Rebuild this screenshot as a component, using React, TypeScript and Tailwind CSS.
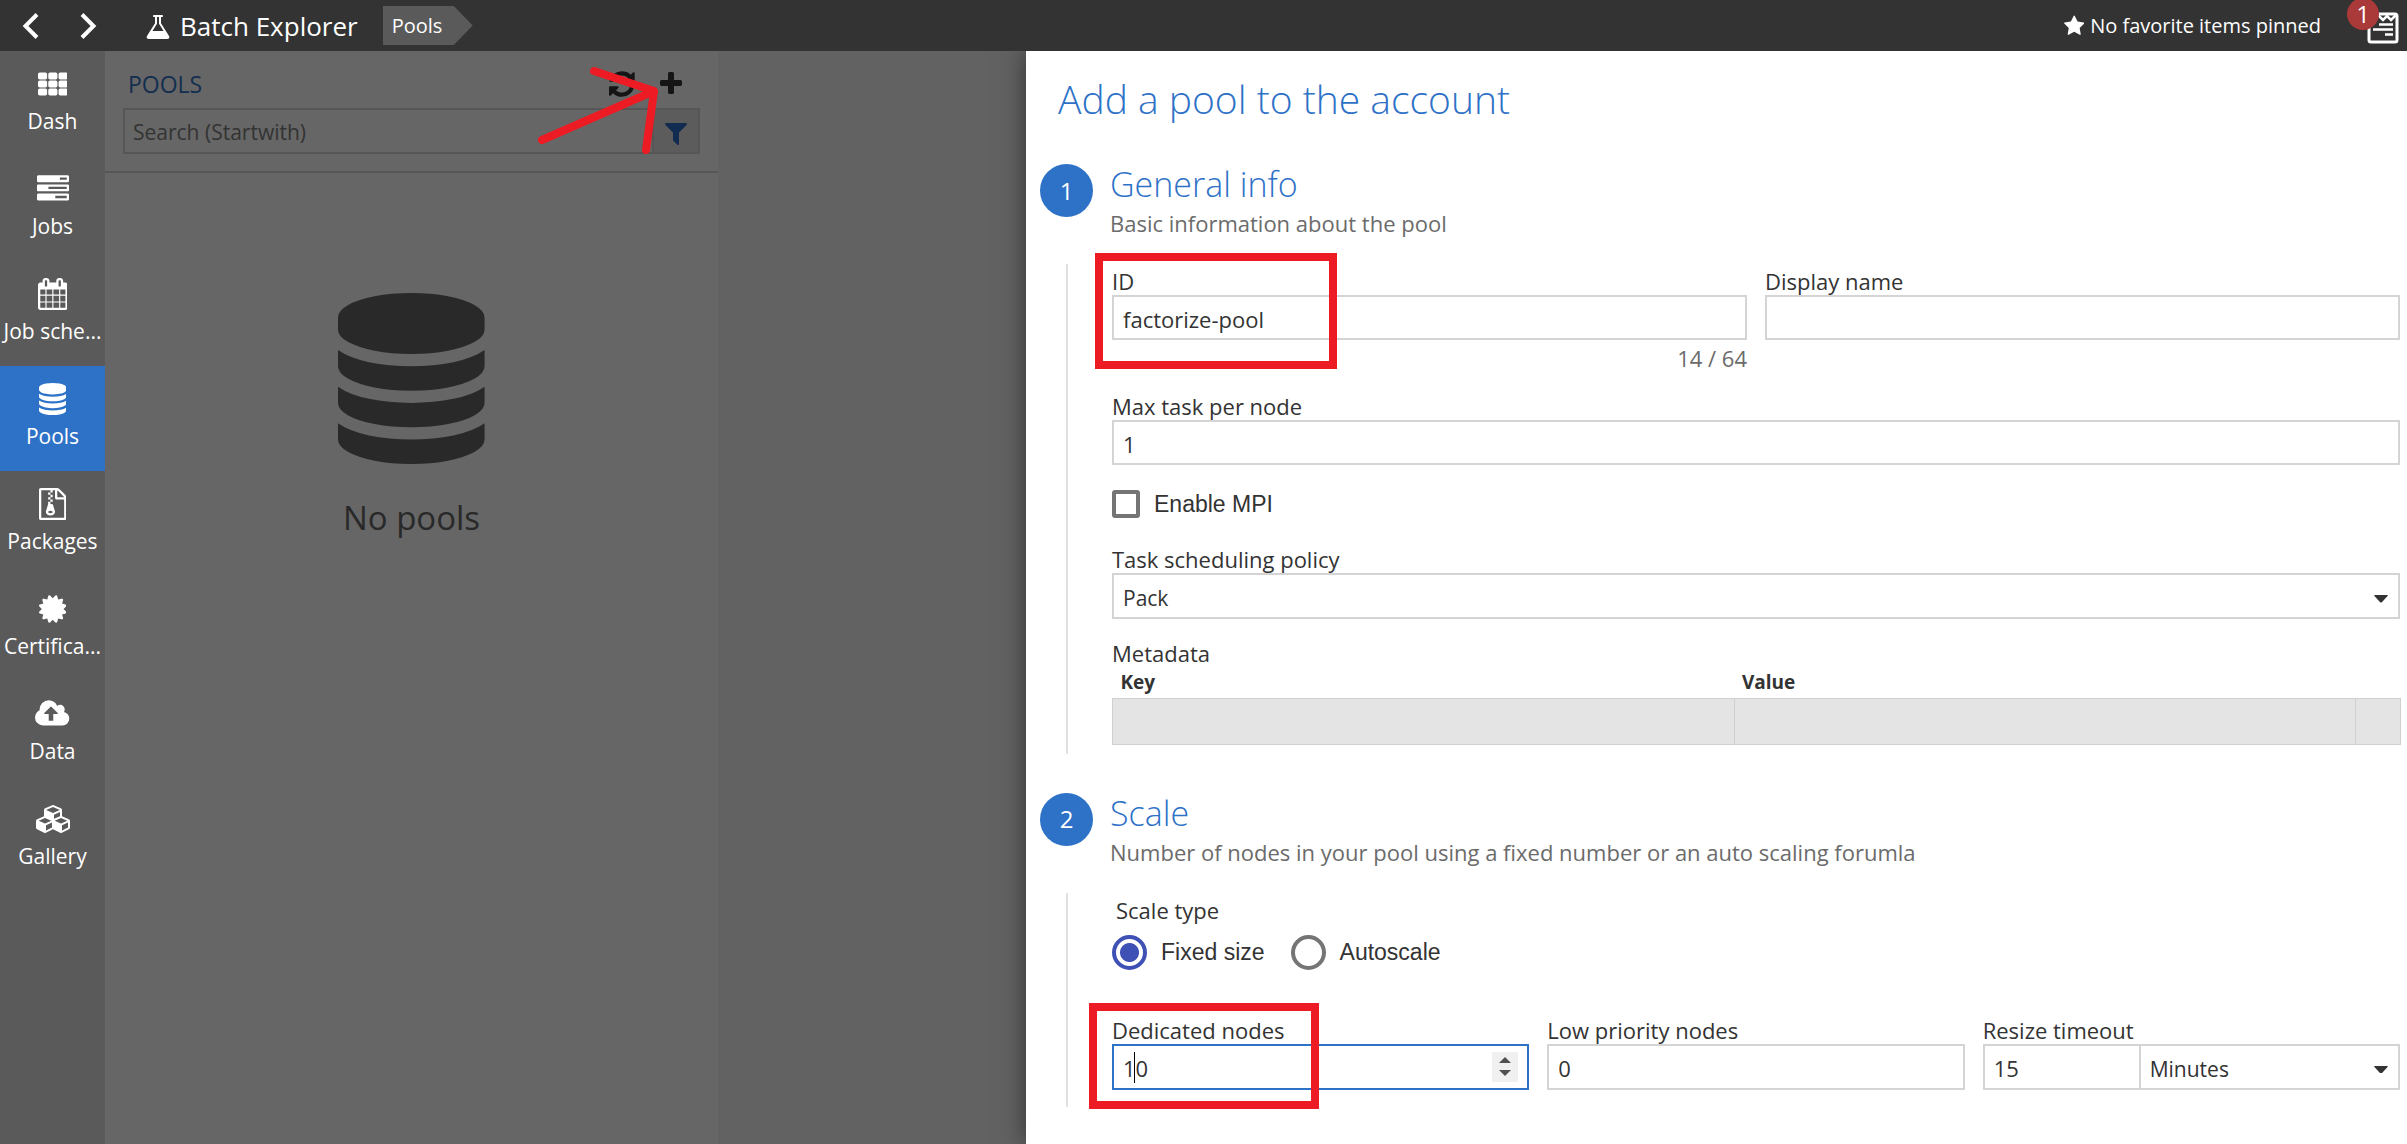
import React from "react";

const ICONS = {
  flask: { box: "128 0 1536 1792", d: "M1591 1448q56 89 21.5 152.5t-140.5 63.5h-1152q-106 0-140.5-63.5t21.5-152.5l503-793v-399h-64q-26 0-45-19t-19-45 19-45 45-19h512q26 0 45 19t19 45-19 45-45 19h-64v399zm-779-725l-272 429h712l-272-429-20-31v-436h-128v436z" },
  star: { box: "64 0 1664 1792", d: "M1728 647q0 22-26 48l-363 354 86 500q1 7 1 20 0 21-10.5 35.5t-30.5 14.5q-19 0-40-12l-449-236-449 236q-22 12-40 12-21 0-31.5-14.5t-10.5-35.5q0-6 2-20l86-500-364-354q-25-27-25-48 0-37 56-46l502-73 225-455q19-41 49-41t49 41l225 455 502 73q56 9 56 46z" },
  refresh: { box: "128 0 1536 1792", d: "M1639 1056q0 5-1 7-64 268-268 434.5t-478 166.5q-146 0-282.5-55t-243.5-157l-129 129q-19 19-45 19t-45-19-19-45v-448q0-26 19-45t45-19h448q26 0 45 19t19 45-19 45l-137 137q71 66 161 102t187 36q134 0 250-65t186-179q11-17 53-117 8-23 30-23h192q13 0 22.5 9.5t9.5 22.5zm25-800v448q0 26-19 45t-45 19h-448q-26 0-45-19t-19-45 19-45l138-138q-148-137-349-137-134 0-250 65t-186 179q-11 17-53 117-8 23-30 23h-199q-13 0-22.5-9.5t-9.5-22.5v-7q65-268 270-434.5t480-166.5q146 0 284 55.5t245 156.5l130-129q19-19 45-19t45 19 19 45z" },
  plus: { box: "192 0 1408 1792", d: "M1600 736v192q0 40-28 68t-68 28h-416v416q0 40-28 68t-68 28h-192q-40 0-68-28t-28-68v-416h-416q-40 0-68-28t-28-68v-192q0-40 28-68t68-28h416v-416q0-40 28-68t68-28h192q40 0 68 28t28 68v416h416q40 0 68 28t28 68z" },
  filter: { box: "192 0 1408 1792", d: "M1595 295q17 41-14 70l-493 493v742q0 42-39 59-13 5-25 5-27 0-45-19l-256-256q-19-19-19-45v-486l-493-493q-31-29-14-70 17-39 59-39h1280q42 0 59 39z" },
  grid: { box: "0 0 1664 1792", d: "M96 256h320q96 0 96 96v192q0 96-96 96h-320q-96 0-96-96v-192q0-96 96-96zM672 256h320q96 0 96 96v192q0 96-96 96h-320q-96 0-96-96v-192q0-96 96-96zM1248 256h320q96 0 96 96v192q0 96-96 96h-320q-96 0-96-96v-192q0-96 96-96zM96 704h320q96 0 96 96v192q0 96-96 96h-320q-96 0-96-96v-192q0-96 96-96zM672 704h320q96 0 96 96v192q0 96-96 96h-320q-96 0-96-96v-192q0-96 96-96zM1248 704h320q96 0 96 96v192q0 96-96 96h-320q-96 0-96-96v-192q0-96 96-96zM96 1152h320q96 0 96 96v192q0 96-96 96h-320q-96 0-96-96v-192q0-96 96-96zM672 1152h320q96 0 96 96v192q0 96-96 96h-320q-96 0-96-96v-192q0-96 96-96zM1248 1152h320q96 0 96 96v192q0 96-96 96h-320q-96 0-96-96v-192q0-96 96-96z" },
  tasks: { box: "0 0 1792 1792", d: "M1024 1408h640v-128h-640v128zm-384-512h1024v-128h-1024v128zm640-512h384v-128h-384v128zm512 832v256q0 26-19 45t-45 19h-1664q-26 0-45-19t-19-45v-256q0-26 19-45t45-19h1664q26 0 45 19t19 45zm0-512v256q0 26-19 45t-45 19h-1664q-26 0-45-19t-19-45v-256q0-26 19-45t45-19h1664q26 0 45 19t19 45zm0-512v256q0 26-19 45t-45 19h-1664q-26 0-45-19t-19-45v-256q0-26 19-45t45-19h1664q26 0 45 19t19 45z" },
  calendar: { box: "64 0 1664 1792", d: "M192 1664h288v-288h-288v288zm352 0h320v-288h-320v288zm-352-352h288v-320h-288v320zm352 0h320v-320h-320v320zm-352-384h288v-288h-288v288zm736 736h320v-288h-320v288zm-384-736h320v-288h-320v288zm768 736h288v-288h-288v288zm-384-352h320v-320h-320v320zm-352-864v-288q0-13-9.5-22.5t-22.5-9.5h-64q-13 0-22.5 9.5t-9.5 22.5v288q0 13 9.5 22.5t22.5 9.5h64q13 0 22.5-9.5t9.5-22.5zm736 864h288v-320h-288v320zm-384-384h320v-288h-320v288zm384 0h288v-288h-288v288zm32-480v-288q0-13-9.5-22.5t-22.5-9.5h-64q-13 0-22.5 9.5t-9.5 22.5v288q0 13 9.5 22.5t22.5 9.5h64q13 0 22.5-9.5t9.5-22.5zm384-64v1280q0 52-38 90t-90 38h-1408q-52 0-90-38t-38-90v-1280q0-52 38-90t90-38h128v-96q0-66 47-113t113-47h64q66 0 113 47t47 113v96h384v-96q0-66 47-113t113-47h64q66 0 113 47t47 113v96h128q52 0 90 38t38 90z" },
  database: { box: "0 0 1536 1792", d: "M768 768q237 0 443-43t325-127v170q0 69-103 128t-280 93.5-385 34.5-385-34.5-280-93.5-103-128v-170q119 84 325 127t443 43zm0 768q237 0 443-43t325-127v170q0 69-103 128t-280 93.5-385 34.5-385-34.5-280-93.5-103-128v-170q119 84 325 127t443 43zm0-384q237 0 443-43t325-127v170q0 69-103 128t-280 93.5-385 34.5-385-34.5-280-93.5-103-128v-170q119 84 325 127t443 43zm0-1152q208 0 385 34.5t280 93.5 103 128v128q0 69-103 128t-280 93.5-385 34.5-385-34.5-280-93.5-103-128v-128q0-69 103-128t280-93.5 385-34.5z" },
  archive: { box: "128 0 1536 1792", d: "M768 384v-128h-128v128h128zm128 128v-128h-128v128h128zm-128 128v-128h-128v128h128zm128 128v-128h-128v128h128zm700-388q28 28 48 76t20 88v1152q0 40-28 68t-68 28h-1344q-40 0-68-28t-28-68v-1600q0-40 28-68t68-28h896q40 0 88 20t76 48zm-444-244v376h376q-10-29-22-41l-313-313q-12-12-41-22zm384 1528v-1024h-416q-40 0-68-28t-28-68v-416h-128v128h-128v-128h-512v1536h1280zm-627-721l107 349q8 27 8 52 0 83-72.5 137.5t-183.5 54.5-183.5-54.5-72.5-137.5q0-25 8-52 21-63 120-396v-128h128v128h79q22 0 39 13t23 34zm-141 465q53 0 90.5-19t37.5-45-37.5-45-90.5-19-90.5 19-37.5 45 37.5 45 90.5 19z" },
  certificate: { box: "128 0 1536 1792", d: "M1504 896l138 135q30 28 20 70-12 41-52 51l-188 48 53 186q12 41-19 70-29 31-70 19l-186-53-48 188q-10 40-51 52-12 2-19 2-31 0-51-22l-135-138-135 138q-28 30-70 20-41-11-51-52l-48-188-186 53q-41 12-70-19-31-29-19-70l53-186-188-48q-40-10-52-51-10-42 20-70l138-135-138-135q-30-28-20-70 12-41 52-51l188-48-53-186q-12-41 19-70 29-31 70-19l186 53 48-188q10-41 51-51 41-12 70 19l135 139 135-139q29-30 70-19 41 10 51 51l48 188 186-53q41-12 70 19 31 29 19 70l-53 186 188 48q40 10 52 51 10 42-20 70z" },
  cloud: { box: "-64 0 1920 1792", d: "M1216 864q0-14-9-23l-352-352q-9-9-23-9t-23 9l-351 351q-10 12-10 24 0 14 9 23t23 9h224v352q0 13 9.5 22.5t22.5 9.5h192q13 0 22.5-9.5t9.5-22.5v-352h224q13 0 22.5-9.5t9.5-22.5zm640 288q0 159-112.5 271.5t-271.5 112.5h-1088q-185 0-316.5-131.5t-131.5-316.5q0-130 70-240t188-165q-2-30-2-43 0-212 150-362t362-150q156 0 285.5 87t188.5 231q71-62 166-62 106 0 181 75t75 181q0 76-41 138 130 31 213.5 135.5t83.5 238.5z" },
  cubes: { box: "-256 0 2176 1792", d: "M384 1632l384-192v-314l-384 164v342zm-64-454l404-173-404-173-404 173zm1088 454l384-192v-314l-384 164v342zm-64-454l404-173-404-173-404 173zm-448-293l384-165v-266l-384 164v267zm-64-379l441-189-441-189-441 189zm1088 518v416q0 36-19 67t-52 47l-448 224q-25 14-57 14t-57-14l-448-224q-4-2-7-4-2 2-7 4l-448 224q-25 14-57 14t-57-14l-448-224q-33-16-52-47t-19-67v-416q0-38 21.5-70t56.5-48l434-186v-400q0-38 21.5-70t56.5-48l448-192q23-10 50-10t50 10l448 192q35 16 56.5 48t21.5 70v400l434 186q36 16 57 48t21 70z" },
  caret: { box: "0 0 16 9", d: "M1 0h14q1.500 0 .5 1.200l-6.500 7q-1 1-2 0l-6.500-7q-1-1.200.5-1.200z" },
};

function Icon({ name, className }: { name: keyof typeof ICONS; className: string }) {
  return (
    <svg aria-hidden="true" viewBox={ICONS[name].box} fill="currentColor" className={className}>
      <path d={ICONS[name].d} />
    </svg>
  );
}

const NAV: { icon: keyof typeof ICONS; label: string; title: string; size: string }[] = [
  { icon: "grid", label: "Dash", title: "Dashboard", size: "h-8" },
  { icon: "tasks", label: "Jobs", title: "Jobs", size: "h-8" },
  { icon: "calendar", label: "Job sche...", title: "Job schedules", size: "h-8" },
  { icon: "database", label: "Pools", title: "Pools", size: "h-8" },
  { icon: "archive", label: "Packages", title: "Packages", size: "h-8" },
  { icon: "certificate", label: "Certifica...", title: "Certificates", size: "h-8" },
  { icon: "cloud", label: "Data", title: "Data", size: "h-8" },
  { icon: "cubes", label: "Gallery", title: "Gallery", size: "h-7" },
];

const FIELD = "block h-[45px] w-full border-2 border-[#d4d4d4] bg-white px-[9px] pt-0.5 text-[22px] outline-none";
const TALL_FIELD = "block h-[46px] w-full border-2 border-[#d4d4d4] bg-white px-[9px] pt-[3px] text-[22px] outline-none";
const SELECT = "block h-[46px] w-full appearance-none border-2 border-[#d4d4d4] bg-white px-[9px] pt-[6px] text-[21px] outline-none";
const LABEL = "block text-[22px] leading-7";

function Header() {
  return (
    <header className="flex h-[51px] shrink-0 items-center bg-[#333] text-white">
      <button aria-label="Back" className="ml-[22px] w-[17px]">
        <svg viewBox="0 0 17 26" className="w-full fill-none stroke-white stroke-[4]"><path d="M15 1.500 3.500 13 15 24.500" /></svg>
      </button>
      <button aria-label="Forward" className="ml-[41px] w-[17px]">
        <svg viewBox="0 0 17 26" className="w-full fill-none stroke-white stroke-[4]"><path d="M2 1.500 13.500 13 2 24.500" /></svg>
      </button>
      <a href="#home" className="ml-[49px] flex items-center gap-[10px] pt-0.5 text-[26px]">
        <Icon name="flask" className="h-7" />
        Batch Explorer
      </a>
      <a href="#pools" className="ml-[25px] flex h-[39px] w-[90px] items-center bg-[#5a5a5a] pl-[9px] text-xl [clip-path:polygon(0_0,79%_0,100%_50%,79%_100%,0_100%)]">
        Pools
      </a>
      <button className="ml-auto flex items-center gap-1.5 text-xl">
        <Icon name="star" className="h-[22px]" />
        No favorite items pinned
      </button>
      <button aria-label="Notifications" className="relative mt-1 mr-2 ml-[46px] w-8">
        <svg viewBox="0 0 32 32" className="w-full fill-none stroke-white stroke-[2.500]">
          <rect x="2" y="2" width="28" height="28" rx="2" strokeWidth="3" />
          <path d="M11 3l5 5 4-4 4 4 5-5M12 12.500h14M6 17.500h20M18 22.500h8" />
        </svg>
        <span className="absolute -top-[14px] -left-5 flex size-8 items-center justify-center rounded-full bg-[#aa3939] text-2xl">1</span>
      </button>
    </header>
  );
}

function Sidebar() {
  return (
    <nav className="w-[105px] shrink-0 bg-[#5a5a5a] text-white">
      {NAV.map((n) => (
        <a
          key={n.title}
          href={"#" + n.icon}
          title={n.title}
          className={`flex h-[105px] flex-col items-center pt-[17px] text-[21px] leading-7 ${n.label === "Pools" ? "bg-[#2e72c7]" : ""}`}
        >
          <span className="flex h-8 items-center"><Icon name={n.icon} className={n.size} /></span>
          <span className="mt-[7px] whitespace-nowrap">{n.label}</span>
        </a>
      ))}
    </nav>
  );
}

function PoolList() {
  return (
    <section className="relative w-[613px] shrink-0 bg-[#666]">
      <div className="border-b-2 border-[#565656] px-[18px] pt-4 pb-[17px]">
        <div className="flex h-[34px] items-center px-[5px]">
          <h2 className="text-[23px] font-medium text-[#142e50]">POOLS</h2>
          <button aria-label="Refresh" className="ml-auto text-[#151515]"><Icon name="refresh" className="h-[30px]" /></button>
          <button aria-label="Add pool" className="mr-[13px] ml-[25px] text-[#151515]"><Icon name="plus" className="h-7" /></button>
        </div>
        <div className="mt-[7px] flex h-[46px] border-2 border-[#565656]">
          <input aria-label="Search" placeholder="Search (Startwith)" className="min-w-0 flex-1 bg-transparent px-2 pt-1 text-[21px] placeholder:text-[#333]" />
          <button aria-label="Filter" className="flex w-[46px] items-center justify-center border-l-2 border-[#565656] bg-[#5c5c5c] pt-1 text-[#122b50]">
            <Icon name="filter" className="h-7" />
          </button>
        </div>
      </div>
      <div className="flex flex-col items-center pt-[120px] text-[#292929]">
        <Icon name="database" className="h-[171px]" />
        <p className="mt-[31px] text-[33px] leading-[46px]">No pools</p>
      </div>
      <svg aria-hidden="true" viewBox="0 0 130 100" className="absolute top-[10px] left-[427px] w-[130px] fill-none stroke-[#ed1c24] stroke-[8] [stroke-linecap:round] [stroke-linejoin:round]">
        <path d="M10 79 122 30M62 10 122 30 114 89" />
      </svg>
    </section>
  );
}

function Section({ step, title, note, children, className }: { step: number; title: string; note: string; children: React.ReactNode; className: string }) {
  return (
    <section className={className}>
      <div className="flex">
        <span className="flex size-[53px] shrink-0 items-center justify-center rounded-full bg-[#2e72c7] text-2xl text-white">{step}</span>
        <div className="ml-[17px]">
          <h2 className="text-[34px] leading-10 font-light text-[#2e72c7]">{title}</h2>
          <p className="text-[22px] leading-[38px] text-[#6b6b6b]">{note}</p>
        </div>
      </div>
      <div className="mt-[22px] ml-[26px] border-l-2 border-[#e0e0e0] pl-11">{children}</div>
    </section>
  );
}

function Select({ id, label, options }: { id: string; label?: string; options: string[] }) {
  return (
    <div className="relative flex-1">
      <select id={id} aria-label={label} className={SELECT}>
        {options.map((o) => <option key={o}>{o}</option>)}
      </select>
      <Icon name="caret" className="pointer-events-none absolute top-[22px] right-3 w-[14px]" />
    </div>
  );
}

function Radio({ label, checked }: { label: string; checked?: boolean }) {
  return (
    <label className="flex items-center gap-[14px] font-['Liberation_Sans',sans-serif] text-[23px]">
      <input
        type="radio"
        name="scale"
        defaultChecked={checked}
        className="size-[35px] appearance-none rounded-full border-4 border-[#757575] checked:border-[#3f51b5] checked:bg-[radial-gradient(circle,#3f51b5_9px,transparent_10px)]"
      />
      {label}
    </label>
  );
}

function Drawer() {
  return (
    <main className="relative min-w-0 flex-1 bg-white pl-[14px] text-[#333] shadow-[0_0_24px_rgba(0,0,0,0.5)] [clip-path:inset(0_0_0_-60px)]">
      <h1 className="pt-5 pl-[18px] text-[39px] leading-[56px] font-light text-[#2e72c7]">Add a pool to the account</h1>

      <Section step={1} title="General info" note="Basic information about the pool" className="mt-[37px]">
        <div className="flex gap-[18px] pr-[7px]">
          <div className="relative flex-1">
            <label htmlFor="pool-id" className={LABEL + " pt-[3px]"}>ID</label>
            <input id="pool-id" defaultValue="factorize-pool" className={FIELD} />
            <p className="text-right text-[22px] leading-9 text-[#6b6b6b]">14 / 64</p>
            <span className="pointer-events-none absolute -top-[11px] -left-[17px] h-[116px] w-[242px] border-8 border-[#ed1c24]" />
          </div>
          <div className="flex-1">
            <label htmlFor="display-name" className={LABEL + " pt-[3px]"}>Display name</label>
            <input id="display-name" className={FIELD} />
          </div>
        </div>
        <div className="mt-4 pr-[7px]">
          <label htmlFor="max-task" className={LABEL}>Max task per node</label>
          <input id="max-task" defaultValue="1" className={FIELD} />
        </div>
        <label className="mt-[25px] flex h-7 items-center gap-[14px] font-['Liberation_Sans',sans-serif] text-[23px]">
          <input type="checkbox" className="size-7 appearance-none rounded-[3px] border-4 border-[#757575]" />
          Enable MPI
        </label>
        <div className="mt-[27px] pr-[7px]">
          <label htmlFor="policy" className={LABEL}>Task scheduling policy</label>
          <Select id="policy" options={["Pack", "Spread"]} />
        </div>
        <p className={LABEL + " mt-5"}>Metadata</p>
        <div className="pr-1.5">
          <table className="w-full table-fixed border-collapse text-left">
            <colgroup><col /><col /><col className="w-[45px]" /></colgroup>
            <thead>
              <tr className="h-[31px] text-[19px]"><th className="px-2">Key</th><th className="px-2">Value</th><th /></tr>
            </thead>
            <tbody>
              <tr className="h-[46px] bg-[#e4e4e4]">
                <td className="border border-[#d0d0d0]" /><td className="border border-[#d0d0d0]" /><td className="border border-[#d0d0d0]" />
              </tr>
            </tbody>
          </table>
        </div>
        <div className="h-[9px]" />
      </Section>

      <Section step={2} title="Scale" note="Number of nodes in your pool using a fixed number or an auto scaling forumla" className="mt-[39px]">
        <fieldset>
          <legend className={LABEL + " pt-[3px] pl-1"}>Scale type</legend>
          <div className="mt-[11px] flex gap-[26px]">
            <Radio label="Fixed size" checked />
            <Radio label="Autoscale" />
          </div>
        </fieldset>
        <div className="mt-[46px] grid grid-cols-3 gap-[18px] pr-[7px] pb-[17px]">
          <div className="relative">
            <label htmlFor="dedicated" className={LABEL}>Dedicated nodes</label>
            <input id="dedicated" defaultValue="10" className="block h-[46px] w-full border-2 border-[#2e72c7] bg-white px-[9px] pt-[3px] text-[22px] outline-none" />
            <span className="pointer-events-none absolute top-9 left-[22px] h-[31px] w-px bg-black" />
            <span className="absolute top-9 right-[11px] flex h-[30px] w-[26px] flex-col items-center justify-center gap-[7px] bg-[#f0f0f0] text-[#505050]">
              <button aria-label="Increase"><svg viewBox="0 0 12 6" className="block w-3 fill-current"><path d="M0 6 6 0l6 6z" /></svg></button>
              <button aria-label="Decrease"><svg viewBox="0 0 12 6" className="block w-3 fill-current"><path d="M0 0h12L6 6z" /></svg></button>
            </span>
            <span className="pointer-events-none absolute -top-[13px] -left-[23px] h-[106px] w-[230px] border-8 border-[#ed1c24]" />
          </div>
          <div>
            <label htmlFor="low" className={LABEL}>Low priority nodes</label>
            <input id="low" defaultValue="0" className={TALL_FIELD} />
          </div>
          <div>
            <label htmlFor="timeout" className={LABEL}>Resize timeout</label>
            <div className="flex">
              <div className="-mr-0.5 w-[158px]">
                <input id="timeout" defaultValue="15" className={TALL_FIELD} />
              </div>
              <Select id="timeout-unit" label="Timeout unit" options={["Minutes", "Hours"]} />
            </div>
          </div>
        </div>
      </Section>
    </main>
  );
}

export default function App() {
  return (
    <div className="flex min-h-screen flex-col bg-[#666] font-['Open_Sans','Noto_Sans',sans-serif]">
      <Header />
      <div className="flex flex-1">
        <Sidebar />
        <PoolList />
        <div className="w-[308px] shrink-0 bg-[#626262]" />
        <Drawer />
      </div>
    </div>
  );
}
